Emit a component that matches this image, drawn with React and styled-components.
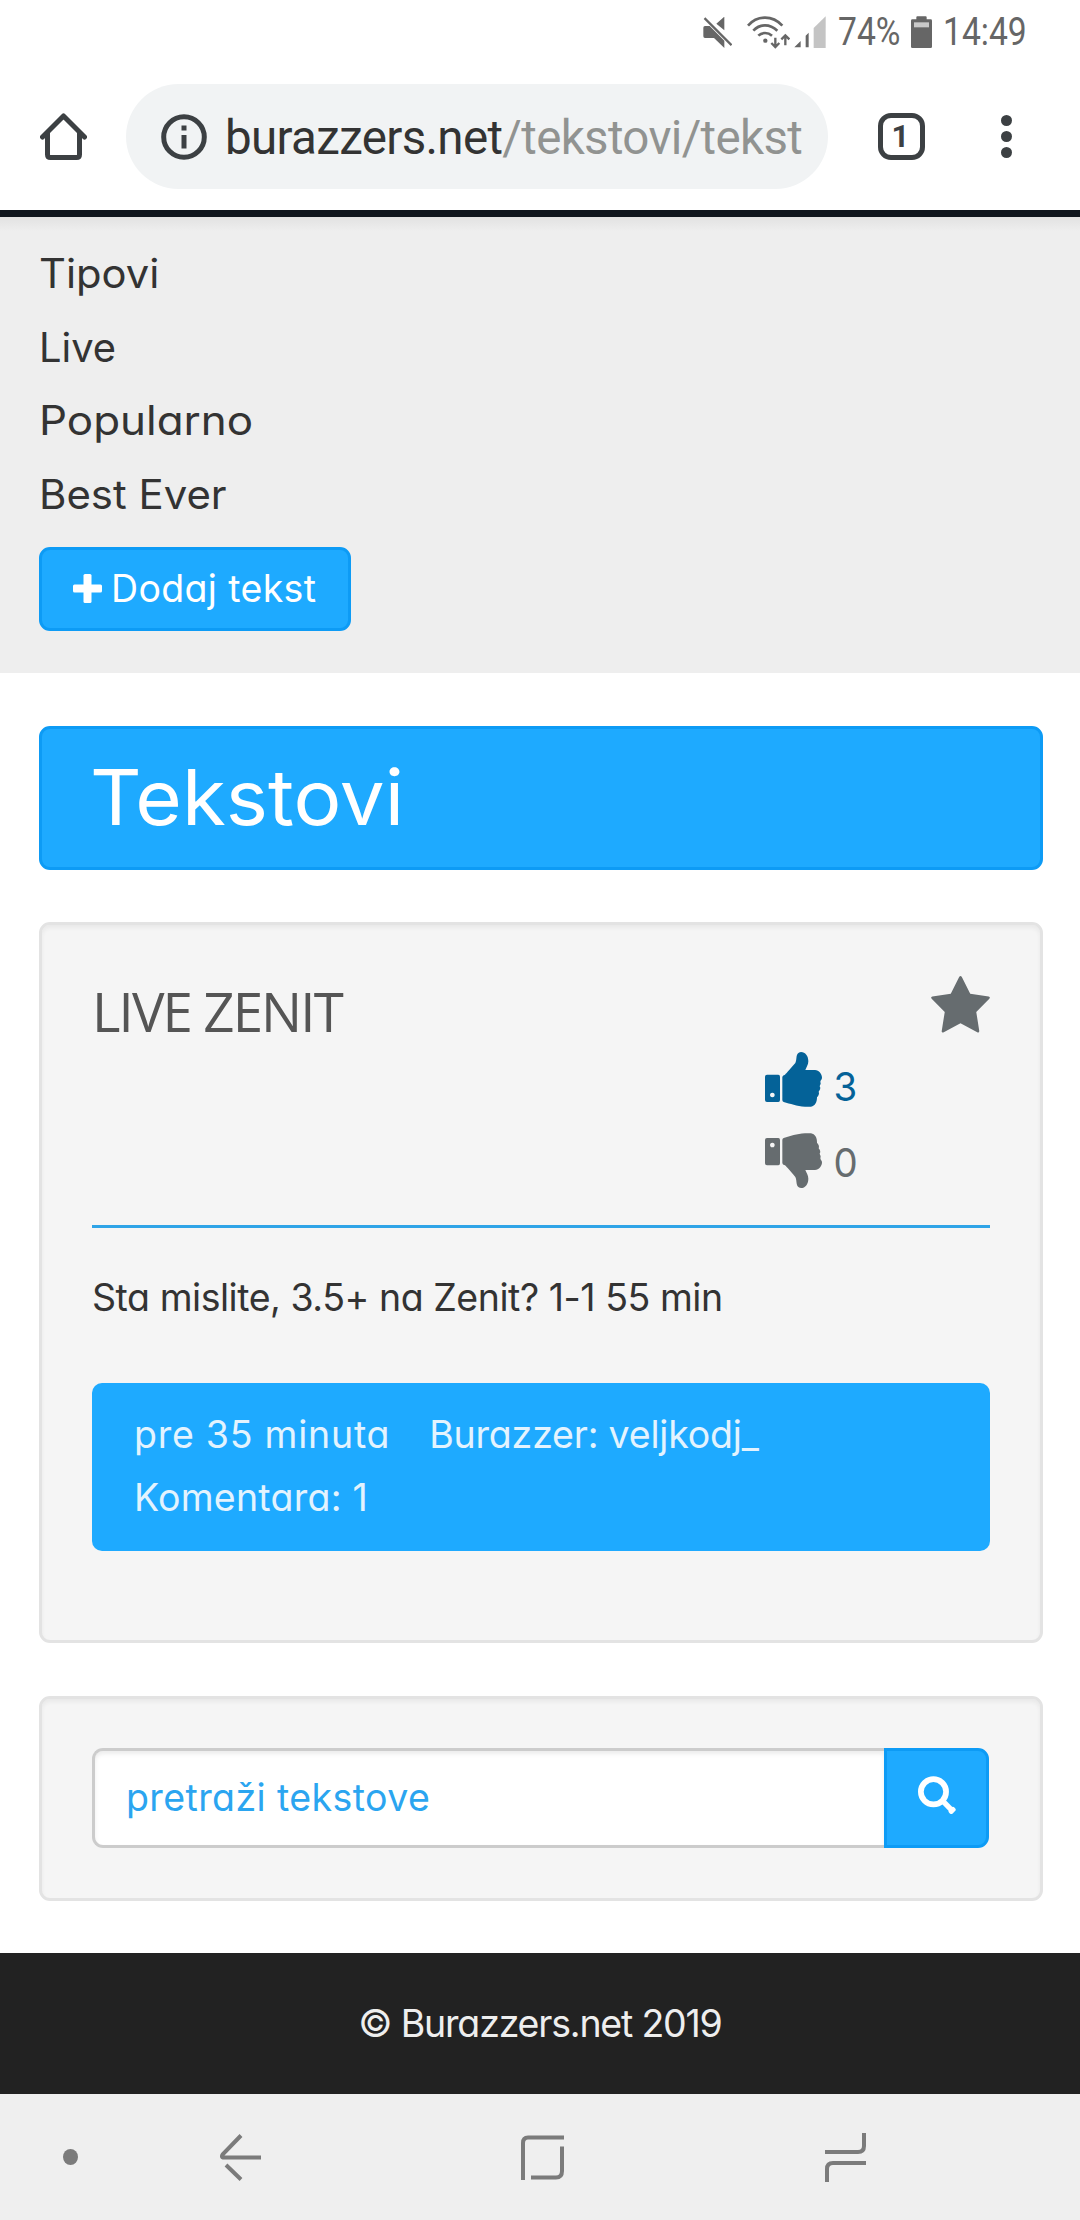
import React from 'react';
import styled, { createGlobalStyle, css } from 'styled-components';

const colors = {
  blue: '#1eaaff',
  blueBorder: '#0d9bf5',
  line: '#2fa4e7',
  panel: '#f5f5f5',
  panelBorder: '#e3e3e3',
  ink: '#333333',
  chrome: '#3c4043',
  muted: '#666c6f',
  liked: '#046298',
};

const Global = createGlobalStyle`
  *, *::before { box-sizing: border-box; }
  html, body { margin: 0; padding: 0; background: #fff; }
  body {
    width: 1080px;
    overflow-x: hidden;
    font-family: Inter, "Open Sans", sans-serif;
    font-feature-settings: "cv11";
    color: ${colors.ink};
  }
  svg { display: block; flex: none; }
`;

const Screen = styled.div`
  width: 1080px;
  height: 2220px;
  display: flex;
  flex-direction: column;
  background: #fff;
  overflow: hidden;
`;

/* ---------- Status bar ---------- */
const StatusBar = styled.header`
  height: 66px;
  padding: 0 53px 2px 0;
  display: flex;
  align-items: center;
  justify-content: flex-end;
  color: #666;
`;
const StatusText = styled.span`
  width: ${p => p.$width}px;
  margin-left: ${p => p.$gap}px;
  font: 400 38px/62px Roboto, sans-serif;
  white-space: nowrap;
  transform: scaleX(0.885);
  transform-origin: left center;
`;
const StatusIcon = styled.svg`
  margin-left: ${p => p.$gap}px;
  fill: currentColor;
`;

/* ---------- Browser toolbar ---------- */
const Toolbar = styled.div`
  height: 144px;
  padding: 18px 68px 21px 40px;
  display: flex;
  align-items: center;
  color: ${colors.chrome};
`;
const AddressPill = styled.div`
  width: 702px;
  height: 105px;
  margin: 0 50px 0 39px;
  padding-left: 35px;
  border-radius: 53px;
  background: #f1f3f4;
  display: flex;
  align-items: center;
`;
const Url = styled.div`
  margin-left: 18px;
  padding-top: 2px;
  font: 400 47.5px/60px Roboto, sans-serif;
  letter-spacing: -0.66px;
  white-space: nowrap;
  color: #333;
`;
const UrlPath = styled.span`
  color: #919391;
`;
const TabCount = styled.div`
  width: 47px;
  height: 47px;
  border: 5.5px solid ${colors.chrome};
  border-radius: 13px;
  display: flex;
  align-items: center;
  justify-content: center;
  font: 700 31px/36px Roboto, sans-serif;
  padding-right: 2px;
`;
const Menu = styled.div`
  margin-left: 76px;
  display: flex;
  flex-direction: column;
  gap: 5px;
`;
const MenuDot = styled.i`
  width: 11px;
  height: 11px;
  border-radius: 50%;
  background: ${colors.chrome};
`;

/* ---------- Site navigation ---------- */
const SiteNav = styled.nav`
  height: 463px;
  border-top: 7px solid #10161d;
  padding: 20px 39px 0;
  background: linear-gradient(#e2e2e2, #eee 14px);
`;
const NavLink = styled.div`
  height: 73.5px;
  font-size: 40.5px;
  line-height: 73.5px;
  transform: scaleX(${p => p.$stretch});
  transform-origin: left center;
`;
const AddButton = styled.button`
  margin: 16px 0 0;
  width: 312px;
  height: 84px;
  padding: 0 0 0 31px;
  display: flex;
  align-items: center;
  border: 3px solid ${colors.blueBorder};
  border-radius: 11px;
  background: ${colors.blue};
  color: #fff;
  font: 400 37.5px/60px Inter, sans-serif;
  font-feature-settings: inherit;
  letter-spacing: 0.35px;
  white-space: nowrap;
`;
const PlusIcon = styled.svg`
  margin-bottom: 2px;
`;
const AddLabel = styled.span`
  margin-left: 9px;
`;

/* ---------- Content ---------- */
const Content = styled.main`
  padding: 53px 37px 0 39px;
  display: flex;
  flex-direction: column;
  gap: 53px;
  flex: 1;
`;
const TitleBar = styled.h1`
  margin: 0 0 -1px;
  height: 144px;
  padding-left: 48px;
  border: 3px solid ${colors.blueBorder};
  border-radius: 11px;
  background: ${colors.blue};
  color: #fff;
  font-size: 76.5px;
  font-weight: 400;
  line-height: 136px;
`;
const TitleText = styled.span`
  display: inline-block;
  transform: scaleX(1.045);
  transform-origin: left center;
`;
const Panel = styled.section`
  height: ${p => p.$height}px;
  padding: 49px 50px;
  border: 3px solid ${colors.panelBorder};
  border-radius: 11px;
  background: ${colors.panel};
  box-shadow: inset 0 3px 4px rgba(0, 0, 0, 0.05);
`;
const PostHead = styled.div`
  height: 251px;
  display: flex;
  justify-content: space-between;
  align-items: flex-start;
`;
const PostTitle = styled.h2`
  margin: 6px 0 0;
  font: 450 54.6px/62px "Open Sans", sans-serif;
  letter-spacing: -1.9px;
  white-space: nowrap;
  color: #555;
`;
const Actions = styled.div`
  width: 225px;
  display: flex;
  flex-direction: column;
`;
const StarIcon = styled.svg`
  align-self: flex-end;
  margin-top: 2px;
  fill: ${colors.muted};
`;
const Vote = styled.div`
  height: ${p => p.$height}px;
  margin-top: ${p => p.$top}px;
  display: flex;
  align-items: flex-start;
  color: ${p => p.$color};
`;
const ThumbIcon = styled.svg`
  fill: currentColor;
  ${p => p.$down && css`transform: scaleY(-1);`}
`;
const VoteCount = styled.span`
  margin: ${p => p.$top}px 0 0 11px;
  font-size: 40px;
  line-height: 48px;
  transform: scaleX(0.96);
`;
const PostBody = styled.div`
  height: 158px;
  padding-top: 40px;
  border-top: 3px solid ${colors.line};
  font-size: 37.5px;
  line-height: 60px;
  letter-spacing: -0.46px;
  white-space: nowrap;
`;
const Meta = styled.div`
  height: 168px;
  padding: 20px 42px;
  display: flex;
  flex-wrap: wrap;
  align-content: flex-start;
  column-gap: 39px;
  border-radius: 10px;
  background: ${colors.blue};
  color: #e3f3fe;
  font-size: 37.5px;
  line-height: 63px;
  white-space: nowrap;
`;
const MetaItem = styled.span`
  letter-spacing: ${p => p.$track}px;
`;
const SearchRow = styled.form`
  display: flex;
  margin: 0;
`;
const SearchInput = styled.input`
  width: 792px;
  height: 100px;
  padding: 0 0 2px 31px;
  border: 3px solid #ccc;
  border-right: 0;
  border-radius: 11px 0 0 11px;
  outline: 0;
  background: #fff;
  box-shadow: inset 0 3px 4px rgba(0, 0, 0, 0.075);
  font: 400 37.5px/60px Inter, sans-serif;
  font-feature-settings: inherit;
  letter-spacing: 0.4px;
  &::placeholder { color: #2ba5f0; opacity: 1; }
`;
const SearchButton = styled.button`
  width: 105px;
  height: 100px;
  padding: 0 0 6px;
  display: flex;
  align-items: center;
  justify-content: center;
  border: 3px solid ${colors.blueBorder};
  border-radius: 0 11px 11px 0;
  background: ${colors.blue};
`;

/* ---------- Footers ---------- */
const SiteFooter = styled.footer`
  height: 141px;
  background: #222;
  color: #eee;
  text-align: center;
  font-size: 37.5px;
  line-height: 141px;
  letter-spacing: -1.2px;
`;
const SystemNav = styled.div`
  height: 126px;
  padding: 0 214px 0 63px;
  display: flex;
  align-items: center;
  background: #efefef;
`;
const NavGlyph = styled.svg`
  margin-left: ${p => p.$gap}px;
  fill: none;
  stroke: #7b7b7b;
  stroke-width: 4;
`;
const NavDot = styled.i`
  width: 16px;
  height: 16px;
  border-radius: 50%;
  background: #7b7b7b;
`;

const Thumb = ({ down }) => (
  <ThumbIcon $down={down} width="57" height="55" viewBox="0 0 171 165">
    <path fillRule="evenodd" d="M6 68H40Q45 68 45 74V144Q45 150 40 150H6Q0 150 0 144V74Q0 68 6 68ZM22 122a7 7 0 1 0 .1 0Z" />
    <path d="M52 75Q52 70 60 68C66 62 74 53 91 33C97 23 90 1 108 0C121 0 130 12 130 28C130 38 124 46 121 54H150C162 54 171 66 171 77C171 83 166 84 166 90C169 95 165 99 164 103C168 108 165 114 161 119C164 125 160 132 156 136C156 151 150 162 138 164H120C95 163 76 155 56 150Q52 149 52 144Z" />
  </ThumbIcon>
);

const LINKS = [
  ['Tipovi', 1.03],
  ['Live', 0.985],
  ['Popularno', 1.085],
  ['Best Ever', 1.035],
];

export default function App() {
  return (
    <Screen>
      <Global />
      <StatusBar>
        <StatusIcon $gap={0} width="29" height="31" viewBox="65 48 87 93">
          <path d="M105 68L129 47V88ZM66 80Q66 75 71 75H85L129 119V141L98 111H71Q66 111 66 106Z" />
          <path d="M67 54L72 49L153 130L148 135Z" />
        </StatusIcon>
        <StatusIcon $gap={15} width="43" height="33" viewBox="197 44 129 99">
          <g fill="none" stroke="currentColor" strokeWidth="8">
            <path d="M200 73Q221 49 251 49T303 73" />
            <path d="M216 88Q231 72 251 72T288 88" />
            <path d="M231 103Q239 95 251 95T272 103" />
            <path strokeWidth="7" d="M282 109V136M270 125L282 137L294 125M312 132V103M300 114L312 102L324 114" />
          </g>
          <circle cx="252" cy="118" r="6.5" />
        </StatusIcon>
        <StatusIcon $gap={4} width="32" height="32" viewBox="340 47 96 96">
          <path d="M341 141L360 122V141ZM375 106L384 97V141H375Z" />
          <path fill="#c4c4c4" d="M399 83L435 48V143H399Z" />
        </StatusIcon>
        <StatusText $width={61} $gap={12}>74%</StatusText>
        <StatusIcon $gap={12} width="21" height="32" viewBox="693 47 63 96">
          <path d="M709 57V51Q709 48 712 48H737Q740 48 740 51V57H752Q756 57 756 61V139Q756 143 752 143H697Q693 143 693 139V61Q693 57 697 57Z" />
          <path fill="#c9c9c9" d="M702 66H747V81H702Z" />
        </StatusIcon>
        <StatusText $width={84} $gap={11}>14:49</StatusText>
      </StatusBar>

      <Toolbar>
        <svg width="47" height="48" viewBox="0 0 47 48" fill="none" stroke="#3c4043" strokeWidth="5" strokeLinecap="round" strokeLinejoin="round">
          <path d="M2.5 24L23.5 3L44.500 24M7.500 20V41.500Q7.500 44.500 10.500 44.500H36.500Q39.500 44.500 39.500 41.500V20" />
        </svg>
        <AddressPill>
          <svg width="46" height="46" viewBox="0 0 46 46">
            <circle cx="23" cy="23" r="20.300" fill="none" stroke="#3c4043" strokeWidth="5" />
            <path fill="#3c4043" d="M20.500 11.500H25.500V16.500H20.500ZM20.500 21H25.500V34.500H20.500Z" />
          </svg>
          <Url>burazzers.net<UrlPath>/tekstovi/tekst</UrlPath></Url>
        </AddressPill>
        <TabCount>1</TabCount>
        <Menu><MenuDot /><MenuDot /><MenuDot /></Menu>
      </Toolbar>

      <SiteNav>
        {LINKS.map(([label, stretch]) => <NavLink key={label} $stretch={stretch}>{label}</NavLink>)}
        <AddButton type="button">
          <PlusIcon width="29" height="29" viewBox="0 0 29 29" fill="#fff">
            <rect x="10.500" width="8" height="29" rx="1.500" />
            <rect y="10.500" width="29" height="8" rx="1.500" />
          </PlusIcon>
          <AddLabel>Dodaj tekst</AddLabel>
        </AddButton>
      </SiteNav>

      <Content>
        <TitleBar><TitleText>Tekstovi</TitleText></TitleBar>

        <Panel $height={721}>
          <PostHead>
            <PostTitle>LIVE ZENIT</PostTitle>
            <Actions>
              <StarIcon width="59" height="57" viewBox="0 0 176 170">
                <path d="M84 3Q88-3 92 3L117 53L172 61Q178 63 174 68L135 107L144 164Q144 170 138 168L88 141L38 168Q31 170 32 164L41 107L2 68Q-2 63 4 61L59 53Z" />
              </StarIcon>
              <Vote $height={55} $top={19} $color={colors.liked}>
                <Thumb /><VoteCount $top={11}>3</VoteCount>
              </Vote>
              <Vote $height={55} $top={26} $color={colors.muted}>
                <Thumb down /><VoteCount $top={6}>0</VoteCount>
              </Vote>
            </Actions>
          </PostHead>
          <PostBody>Sta mislite, 3.5+ na Zenit? 1-1 55 min</PostBody>
          <Meta>
            <MetaItem $track={0.75}>pre 35 minuta</MetaItem>
            <MetaItem $track={-0.2}>Burazzer: veljkodj_</MetaItem>
            <MetaItem $track={0.25}>Komentara: 1</MetaItem>
          </Meta>
        </Panel>

        <Panel $height={205}>
          <SearchRow>
            <SearchInput placeholder="pretraži tekstove" />
            <SearchButton type="button" aria-label="pretraži">
              <svg width="38" height="38" viewBox="0 0 113 113" fill="none" stroke="#fff">
                <circle cx="46" cy="47" r="37.500" strokeWidth="17" />
                <path strokeWidth="16" d="M74 75L98 99" />
                <path strokeWidth="12" strokeLinejoin="round" fill="#fff" d="M97 105L104 98L106 100L99 107Z" />
              </svg>
            </SearchButton>
          </SearchRow>
        </Panel>
      </Content>

      <SiteFooter>© Burazzers.net 2019</SiteFooter>
      <SystemNav>
        <NavDot />
        <NavGlyph $gap={142} width="41" height="47" viewBox="0 0 41 47">
          <path d="M21 1.500L3 20Q.5 23.500 4 23.500H41M6 31L21 45.500" />
        </NavGlyph>
        <NavGlyph $gap={260} width="43" height="45" viewBox="0 0 43 45">
          <path d="M2 45V8Q2 2.500 7 2.500H43M41 11.500V36Q41 42.500 35 42.500H10" />
        </NavGlyph>
        <NavGlyph $gap={261} width="41" height="49" viewBox="0 0 41 49">
          <path d="M39 0V13Q39 19 33 19H0M2 49V36Q2 30 8 30H41" />
        </NavGlyph>
      </SystemNav>
    </Screen>
  );
}
